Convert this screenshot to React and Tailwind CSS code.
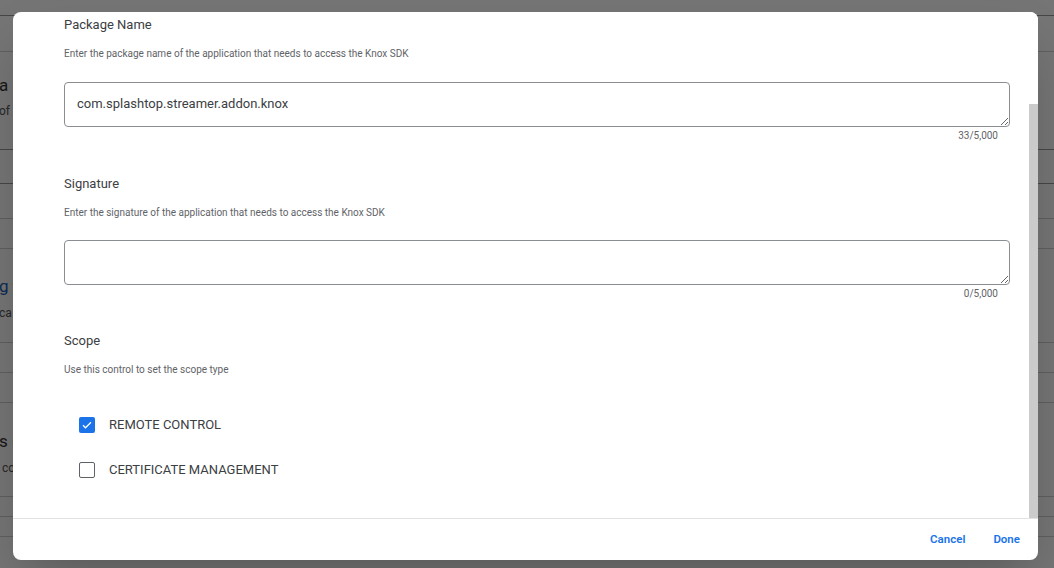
import React from 'react';

const font = { fontFamily: 'Roboto, "Noto Sans", sans-serif' };

function PageRow({ h, dark, children }) {
    return (
        <div className={`relative shrink-0 border-b ${dark ? 'border-[#999]' : 'border-[#d0d0d0]'} ${h}`}>
            {children}
        </div>
    );
}

function Field({ label, helper, value, count, className, boxGap = 'mt-5' }) {
    return (
        <div className={className}>
            <div className="text-[13px] leading-[20px] text-[#3c4043]">{label}</div>
            <div className="mt-[11px] text-[10px] leading-[16px] text-[#5f6368]">{helper}</div>
            <textarea
                defaultValue={value}
                readOnly
                className={`${boxGap} block h-[45px] w-full resize-y overflow-hidden rounded-[4px] border border-[#8a8d91] px-3 py-[11px] text-[13px] leading-[20px] text-[#3c4043] outline-none`}
            />
            <div className="mt-[2px] pr-3 text-right text-[10px] leading-[14px] text-[#5f6368]">{count}</div>
        </div>
    );
}

function Check({ checked, label, className }) {
    return (
        <div className={`flex items-center pl-[15px] ${className}`}>
            {checked ? (
                <span className="flex h-4 w-4 items-center justify-center rounded-[2px] bg-[#1a73e8]">
                    <svg width="12" height="12" viewBox="0 0 24 24" fill="none" stroke="white" strokeWidth="2.5">
                        <path d="M4 12.5l5 5L20 6.5" />
                    </svg>
                </span>
            ) : (
                <span className="h-4 w-4 rounded-[2px] border-[1.5px] border-[#5f6368]" />
            )}
            <span className="ml-[14px] text-[13px] leading-[20px] text-[#3c4043]">{label}</span>
        </div>
    );
}

export default function App() {
    return (
        <div className="relative h-[568px] w-[1054px] overflow-hidden bg-white" style={font}>
            {/* page behind */}
            <div className="flex h-full flex-col">
                <PageRow h="h-[16px]" dark />
                <PageRow h="h-[36px]" />
                <PageRow h="h-[98px]" dark>
                    <div className="ml-[-1px] mt-[23px] text-[17px] leading-[20px] text-[#333]">a S</div>
                    <div className="ml-[-1px] mt-[8px] text-[12px] leading-[16px] text-[#555]">of</div>
                </PageRow>
                <PageRow h="h-[34px]" dark />
                <PageRow h="h-[35px]" />
                <PageRow h="h-[30px]" />
                <PageRow h="h-[94px]">
                    <div className="ml-[-1px] mt-[27px] text-[17px] leading-[20px] text-[#1a5fb4]">g th</div>
                    <div className="ml-[-4px] mt-[9px] text-[12px] leading-[16px] text-[#555]">ica</div>
                </PageRow>
                <PageRow h="h-[30px]" />
                <PageRow h="h-[30px]" />
                <PageRow h="h-[94px]">
                    <div className="ml-[-1px] mt-[28px] text-[17px] leading-[20px] text-[#333]">s (F</div>
                    <div className="ml-[2px] mt-[9px] text-[12px] leading-[16px] text-[#555]">co</div>
                </PageRow>
                <PageRow h="h-[20px]" />
                <PageRow h="h-[20px]" />
            </div>

            {/* overlay */}
            <div className="absolute inset-0 bg-black/[0.54]" />

            {/* dialog */}
            <div className="absolute left-[13px] top-[12px] flex h-[548px] w-[1025px] flex-col overflow-hidden rounded-lg bg-white shadow-2xl">
                <div className="flex h-[506px]">
                    <div className="flex-1 overflow-hidden pl-[51px] pr-[19px] pt-[3px]">
                        <Field
                            label="Package Name"
                            helper="Enter the package name of the application that needs to access the Knox SDK"
                            value="com.splashtop.streamer.addon.knox"
                            count="33/5,000"
                        />
                        <Field
                            className="mt-[31px]"
                            boxGap="mt-[19px]"
                            label="Signature"
                            helper="Enter the signature of the application that needs to access the Knox SDK"
                            value=""
                            count="0/5,000"
                        />
                        <div className="mt-[30px] text-[13px] leading-[20px] text-[#3c4043]">Scope</div>
                        <div className="mt-[11px] text-[10px] leading-[16px] text-[#5f6368]">Use this control to set the scope type</div>
                        <Check className="mt-[37px]" checked label="REMOTE CONTROL" />
                        <Check className="mt-[25px]" label="CERTIFICATE MANAGEMENT" />
                    </div>
                    <div className="flex w-[9px] flex-col justify-end bg-white">
                        <div className="h-[414px] bg-[#cbcbcb]" />
                    </div>
                </div>
                <div className="flex flex-1 items-center justify-end gap-[28px] border-t border-[#e2e2e2] pr-[18px] pt-[1px]">
                    <button className="text-[11.5px] font-semibold text-[#1a73e8]">Cancel</button>
                    <button className="text-[11.5px] font-semibold text-[#1a73e8]">Done</button>
                </div>
            </div>
        </div>
    );
}
